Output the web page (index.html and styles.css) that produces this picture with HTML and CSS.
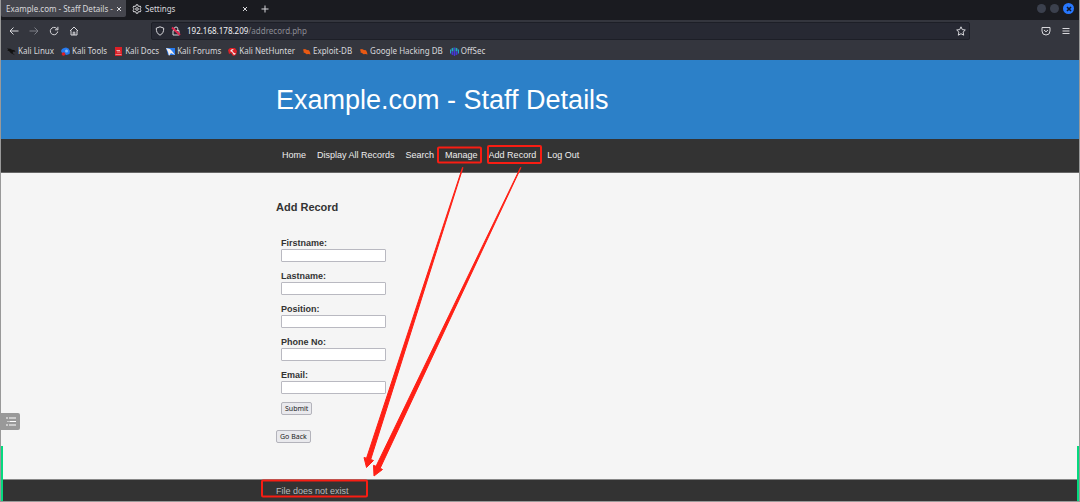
FILE: index.html
```html
<!DOCTYPE html>
<html lang="en">
<head>
<meta charset="utf-8">
<title>Example.com - Staff Details</title>
<link rel="stylesheet" href="styles.css">
</head>
<body>
<div class="browser">
  <div class="tabs">
    <div class="tab tab-active"><span class="tab-title">Example.com - Staff Details -</span>
      <button class="close" aria-label="Close tab"><svg width="6" height="6" viewBox="0 0 6 6"><path d="M1 1l4 4M5 1l-4 4"/></svg></button></div>
    <div class="tab">
      <svg width="10" height="10" viewBox="0 0 20 20" stroke-width="2"><circle cx="10" cy="10" r="2.6"/><path d="M8.3 1.5h3.4l.6 2.7 1.4.8 2.7-.9 1.7 3-2 1.9v2l2 1.9-1.7 3-2.7-.9-1.4.8-.6 2.7H8.300l-.6-2.700-1.400-.8-2.700.9-1.700-3 2-1.900V9l-2-1.900 1.700-3 2.700.9 1.400-.8z"/></svg>
      <span class="tab-title">Settings</span>
      <button class="close" aria-label="Close tab"><svg width="6" height="6" viewBox="0 0 6 6"><path d="M1 1l4 4M5 1l-4 4"/></svg></button></div>
    <button class="new-tab" aria-label="New tab"><svg width="8" height="8" viewBox="0 0 8 8"><path d="M4 .5v7M.5 4h7"/></svg></button>
    <div class="window-controls">
      <button class="dot" aria-label="Minimize"></button>
      <button class="dot" aria-label="Maximize"></button>
      <button class="dot dot-close" aria-label="Close"><svg width="6" height="6" viewBox="0 0 6 6" stroke-width="1.600"><path d="M1 1l4 4M5 1l-4 4"/></svg></button>
    </div>
  </div>
  <div class="toolbar">
    <div class="nav-buttons">
      <button aria-label="Back"><svg width="10" height="10" viewBox="0 0 10 10"><path d="M9.500 5H1M4.500 1.500L1 5l3.500 3.500"/></svg></button>
      <button class="dim" aria-label="Forward"><svg width="10" height="10" viewBox="0 0 10 10"><path d="M.5 5H9M5.500 1.500L9 5 5.500 8.500"/></svg></button>
      <button aria-label="Reload"><svg width="10" height="10" viewBox="0 0 10 10"><path d="M8.700 5.500A3.700 3.700 0 1 1 7.600 2.400L8.700 3.500M8.900.8v3H6"/></svg></button>
      <button aria-label="Home"><svg width="10" height="10" viewBox="0 0 10 10"><path d="M1 5L5 1l4 4M2 4.500V9h6V4.500M4.200 9V6.200h1.600V9"/></svg></button>
    </div>
    <div class="address">
      <svg width="10" height="10" viewBox="0 0 10 10"><path d="M5 .8l3.700 1.300c.1 3.300-.8 5.600-3.700 7.100C2.100 7.700 1.200 5.400 1.300 2.100z"/></svg>
      <svg width="10" height="10" viewBox="0 0 10 10"><path d="M2 4.600h6V9H2zM3.200 4.600V2.800a1.800 1.800 0 0 1 3.600 0v1.800"/><path class="strike" d="M1 1.500l8 7.500"/></svg>
      <span class="url"><b>192.168.178.209</b>/addrecord.php</span>
      <button aria-label="Bookmark this page"><svg width="10" height="10" viewBox="0 0 10 10"><path d="M5 .8l1.300 2.800 3 .4-2.200 2.100.6 3.100L5 7.700 2.300 9.200l.6-3.100L.7 4l3-.4z"/></svg></button>
    </div>
    <div class="tools">
      <button aria-label="Save to Pocket"><svg width="10" height="10" viewBox="0 0 10 10"><path d="M1 1.500h8V5a4 4 0 0 1-8 0zM3 4l2 1.800L7 4"/></svg></button>
      <button aria-label="Menu"><svg width="8" height="8" viewBox="0 0 8 8"><path d="M.5 1.500h7M.5 4h7M.5 6.500h7"/></svg></button>
    </div>
  </div>
  <nav class="bookmarks" aria-label="Bookmarks">
    <a href="#"><svg width="9" height="9" viewBox="0 0 9 9"><path class="black" d="M0 1.500l3.500.3 1.500 1 2.500.5 1 1.500-2-.3-1 1.500 2.500 2.300-4-2-2-2.300-2-.3 1.500-.7z"/></svg>Kali Linux</a>
    <a href="#"><svg width="9" height="9" viewBox="0 0 9 9"><path class="blue" d="M1 2l2-1 2-.5 2.500 1L9 4l-.5 3-3 1L1 6 0 4z"/><circle class="light" cx="5.500" cy="4" r="1.500"/><circle class="red" cx="2.500" cy="7" r="1.800"/></svg>Kali Tools</a>
    <a href="#"><svg width="9" height="9" viewBox="0 0 9 9"><path class="red" d="M1 0h7v9H1z"/><path class="white" d="M2.500 3h3.500v.8H2.500zM3 4.700h3.500v.6H3zM1.500 7.600h6v.5h-6z"/></svg>Kali Docs</a>
    <a href="#"><svg width="9" height="9" viewBox="0 0 9 9"><path class="blue" d="M0 1h9v7H2z"/><path class="white" d="M0 1l4 1 2 2 3 4-4-2-2 3-1-4z"/></svg>Kali Forums</a>
    <a href="#"><svg width="9" height="9" viewBox="0 0 9 9"><path class="red" d="M0 3l2-2h5l2 3-1 4-3 1-2-3-2 1z"/><path class="white" d="M2 4l2-2 2 .7-2 .8 2 2.500 2 .5-2 1.500-2-3z"/></svg>Kali NetHunter</a>
    <a href="#"><svg width="9" height="9" viewBox="0 0 9 9"><path class="orange" d="M1 2.500L3 2l2 1 2 .2 1 2 .5 2.300-2-.5-2 .2L3 6 1.500 5.500l.2-1z"/></svg>Exploit-DB</a>
    <a href="#"><svg width="9" height="9" viewBox="0 0 9 9"><path class="orange" d="M1 2.500L3 2l2 1 2 .2 1 2 .5 2.300-2-.5-2 .2L3 6 1.500 5.500l.2-1z"/></svg>Google Hacking DB</a>
    <a href="#"><svg width="9" height="9" viewBox="0 0 9 9"><path class="cyan" d="M0 3l1-1v5L0 6zM1.500 1.500L3.500.5v4h-2zM5.500.5l2 1v3h-2zM8 2l1 1v3L8 7z"/><path class="indigo" d="M1.500 4.500h2v4l-2-1zM4 .5h1V9H4zM5.500 4.500h2v3l-2 1z"/></svg>OffSec</a>
  </nav>
</div>
<header class="banner"><div class="container"><h1>Example.com - Staff Details</h1></div></header>
<nav class="menu" aria-label="Main">
  <div class="container menu-list">
    <a href="#">Home</a><a href="#">Display All Records</a><a href="#">Search</a><a href="#">Manage</a><a href="#">Add Record</a><a href="#">Log Out</a>
  </div>
</nav>
<main class="content">
  <div class="container">
    <h2>Add Record</h2>
    <form class="record">
      <div class="field"><label for="first">Firstname:</label><input id="first" type="text"></div>
      <div class="field"><label for="last">Lastname:</label><input id="last" type="text"></div>
      <div class="field"><label for="position">Position:</label><input id="position" type="text"></div>
      <div class="field"><label for="phone">Phone No:</label><input id="phone" type="text"></div>
      <div class="field"><label for="email">Email:</label><input id="email" type="text"></div>
      <button class="push" type="submit">Submit</button>
    </form>
    <button class="push" type="button">Go Back</button>
  </div>
</main>
<footer class="footer"><div class="container">File does not exist</div></footer>
<button class="outline-toggle" aria-label="Outline"><svg width="10" height="9" viewBox="0 0 10 9"><path d="M0 1h2M3 1h7M1.500 4.500h1M3.500 4.500H10M0 8h2M3 8h7"/></svg></button>
<div class="edge edge-left"></div>
<div class="edge edge-right"></div>
<svg class="annotations" width="1080" height="502" viewBox="0 0 1080 502" aria-hidden="true">
  <rect x="438" y="147.500" width="43" height="15" rx="1"/>
  <rect x="488" y="146" width="53" height="17" rx="1"/>
  <rect x="262" y="480.500" width="105" height="16" rx="1"/>
  <path d="M463 167.500L370.700 459.500 373.500 460.500 366.500 467.500 364 457.500 366.500 458.200 462.500 167.500z"/>
  <path d="M521 167.500L380.200 468.200 382.500 469.500 374 476 373.500 465.300 376 466.300 520.500 167.500z"/>
</svg>
</body>
</html>
```
FILE: styles.css
```css
* { box-sizing: border-box; }
body {
  margin: 0;
  min-height: 100vh;
  display: flex;
  flex-direction: column;
  position: relative;
  overflow-x: hidden;
  background: #f5f5f5;
  color: #333;
  border: 1px solid #999;
  border-top: 0;
  font: 9px/12px "Liberation Sans", Arial, sans-serif;
}
button { font: inherit; color: inherit; padding: 0; border: 0; background: none; }
svg { display: block; flex: none; fill: none; stroke: currentColor; }
a { color: inherit; text-decoration: none; }

.browser { background: #34363e; color: #d8d8dc; font-family: "Noto Sans", sans-serif; font-size: 8px; }
.tabs { display: flex; align-items: center; height: 20px; padding-bottom: 3px; background: #1a1b20; }
.tab { display: flex; align-items: center; gap: 3px; width: 126px; height: 17px; padding: 0 4px 0 6px; }
.tab-active { width: 125px; padding-left: 5px; background: #45464e; border-radius: 0 0 2px 2px; }
.tab-title { flex: 1; white-space: nowrap; }
.new-tab { margin-left: 9px; }
.window-controls { display: flex; align-items: center; gap: 4px; margin-left: auto; padding-right: 5px; }
.dot { display: grid; place-items: center; width: 9px; height: 9px; border-radius: 50%; background: #3b404d; }
.dot-close { width: 11px; height: 11px; background: #2777ff; color: #111827; }

.toolbar { display: flex; align-items: center; height: 22px; padding: 0 9px 0 8px; }
.nav-buttons { display: flex; gap: 10px; }
.dim { color: #7c7e86; }
.address {
  display: flex;
  align-items: center;
  gap: 6px;
  flex: 1;
  height: 18px;
  margin: 0 71px 0 72px;
  padding: 0 3px;
  background: #272933;
  border: 1px solid #1d1f27;
  border-radius: 2px;
}
.url { flex: 1; color: #8b8c94; }
.url b { font-weight: 400; color: #f0f0f3; }
.strike { stroke: #e22850; stroke-width: 2; }
.tools { display: flex; align-items: center; gap: 11px; }

.bookmarks { display: flex; align-items: center; gap: 7px; height: 18px; padding: 0 6px; }
.bookmarks a { display: flex; align-items: center; gap: 2px; white-space: nowrap; }
.bookmarks path, .bookmarks circle { stroke: none; }
.bookmarks .black { fill: #111; }
.bookmarks .blue { fill: #267bf0; }
.bookmarks .light { fill: #83b8f5; }
.bookmarks .red { fill: #dc2027; }
.bookmarks .white { fill: #f2eeee; }
.bookmarks .orange { fill: #e95913; }
.bookmarks .cyan { fill: #22a5c5; }
.bookmarks .indigo { fill: #4438d5; }

.container { width: 100%; max-width: 528px; margin: 0 auto; }
.banner { background: #2c80c8; color: #fff; padding: 25px 0 23px; }
h1 { margin: 0; font-size: 27px; line-height: 31px; font-weight: 400; }
.menu { background: #333; color: #eee; padding: 10px 0 11px; border-bottom: 1px solid #666; }
.menu-list { display: flex; gap: 11px; padding-left: 6px; }

.content { flex: 1; }
h2 { margin: 28px 0 23px; font-size: 11px; line-height: 13px; }
.record { padding-left: 5px; margin-bottom: 15px; }
.field { display: flex; flex-direction: column; margin-bottom: 8px; }
.field label { font-weight: 700; }
.field input { width: 105px; height: 13px; padding: 0 2px; font: inherit; border: 1px solid #b9b9c1; border-radius: 1px; background: #fff; }
.push {
  display: block;
  height: 13px;
  padding: 0 3px;
  border: 1px solid #b3b3bb;
  border-radius: 2px;
  background: #e9e9ed;
  font: 7px/11px "Noto Sans", sans-serif;
  color: #222;
}

.footer { background: #333; color: #bbb; border-top: 1px solid #888; padding: 5px 0 4px; }

.outline-toggle { position: absolute; left: 0; top: 413px; display: grid; place-items: center; width: 19px; height: 17px; background: #999; color: #fff; border-radius: 0 2px 2px 0; }
.edge { position: absolute; bottom: 0; width: 3px; height: 55px; background: #05d97f; }
.edge-left { left: -1px; }
.edge-right { right: -1px; }
.annotations { position: absolute; left: -1px; top: 0; pointer-events: none; }
.annotations rect { stroke: #f81d13; stroke-width: 2; }
.annotations path { fill: #ff2015; stroke: #ff2015; stroke-width: 1; }
```
